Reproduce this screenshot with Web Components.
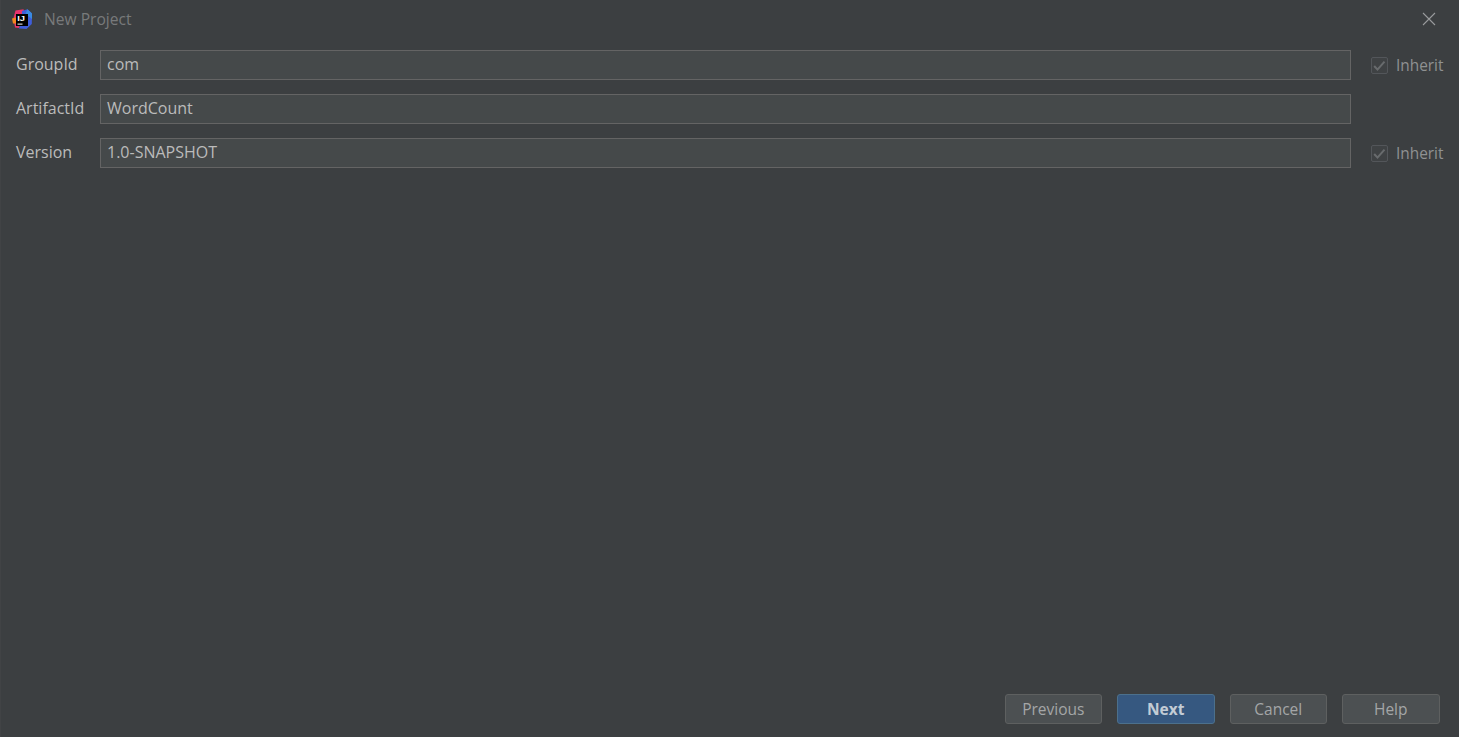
<!DOCTYPE html>
<html><head><meta charset="utf-8"><title>New Project</title>
<style>
html,body{margin:0;height:100%;background:#3c3f41;overflow:hidden}
body{font-family:"Open Sans","Noto Sans",sans-serif}
</style></head><body>
<np-dialog>
  <np-titlebar slot="title">New Project</np-titlebar>
  <np-row label="GroupId" value="com" inherit></np-row>
  <np-row label="ArtifactId" value="WordCount"></np-row>
  <np-row label="Version" value="1.0-SNAPSHOT" inherit></np-row>
  <np-button slot="footer">Previous</np-button>
  <np-button slot="footer" primary>Next</np-button>
  <np-button slot="footer">Cancel</np-button>
  <np-button slot="footer">Help</np-button>
</np-dialog>
<script>
class NpDialog extends HTMLElement{constructor(){super();this.attachShadow({mode:'open'}).innerHTML=`<style>
:host{display:flex;flex-direction:column;height:737px;width:1459px;box-sizing:border-box;background:#3c3f41;border-left:1px solid #414345}
.body{flex:1;display:flex;flex-direction:column;gap:14px;padding:12px 8px 0 15px}
.foot{display:flex;justify-content:flex-end;gap:15px;padding:0 19.5px 13px 0}
</style><slot name="title"></slot><div class="body"><slot></slot></div><div class="foot"><slot name="footer"></slot></div>`}}
class NpTitlebar extends HTMLElement{constructor(){super();this.attachShadow({mode:'open'}).innerHTML=`<style>
:host{display:flex;align-items:center;height:38px;box-sizing:border-box;padding:0 23px 0 11px;font-size:15.6px;color:#787a7b}
.t{flex:1;margin-left:12px}
svg{display:block}
text{font-family:"Liberation Sans",sans-serif;font-weight:700;font-size:8px;fill:#fff}
</style>
<svg width="20" height="20" viewBox="0 0 20 20">
<path d="M1.5 9 L3.5 1.5 L11.5 0.2 L13 6 L7 19 L3 18.5 Z" fill="#e8336b"/>
<path d="M0 9.5 L4 8.5 L4 14.5 L1 14.5 Z" fill="#f2861f"/>
<path d="M10 2 L15.5 0.3 L20 4.5 L19.8 15 L14.5 20 L7 19.5 L10 10 Z" fill="#3f5edb"/>
<path d="M15.5 0.3 L20 4.5 L20 10 L13.5 5 Z" fill="#3a8ae0"/>
<rect x="4" y="5" width="12" height="12" fill="#000"/>
<rect x="5.5" y="14.6" width="5" height="1" fill="#fff"/>
<text x="5.2" y="12.4" textLength="7.8" lengthAdjust="spacingAndGlyphs">IJ</text>
</svg>
<span class="t"><slot></slot></span>
<svg width="14" height="14" viewBox="0 0 14 14"><path d="M1 1L13 13M13 1L1 13" stroke="#9a9c9d" stroke-width="1.1" fill="none"/></svg>`}}
class NpRow extends HTMLElement{connectedCallback(){if(this.shadowRoot)return;const inh=this.hasAttribute('inherit');this.attachShadow({mode:'open'}).innerHTML=`<style>
:host{display:flex;align-items:center;height:30px;font-size:16px;color:#bbbbbb}
.l{width:84px;flex:none;padding-bottom:2px}
.f{width:1251px;height:30px;flex:none;box-sizing:border-box;border:1px solid #646464;background:#45494a;padding:0 6px 2px;display:flex;align-items:center}
.c{margin-left:20px;display:flex;align-items:center;gap:8px;color:#8f9192;font-size:15.4px}
.b{width:17px;height:17px;box-sizing:border-box;border:1px solid #53565a;border-radius:2px;background:#3f4244;display:block}
</style><span class="l">${this.getAttribute('label')}</span><div class="f">${this.getAttribute('value')}</div>${inh?`<div class="c"><svg class="b" viewBox="0 0 15 15"><path d="M2.2 8L5.5 11.6L12.5 3.6" stroke="#686b6d" stroke-width="2" fill="none"/></svg><span>Inherit</span></div>`:''}`}}
class NpButton extends HTMLElement{constructor(){super();this.attachShadow({mode:'open'}).innerHTML=`<style>
:host{display:flex;align-items:center;justify-content:center;width:97.5px;height:30px;box-sizing:border-box;border:1px solid #5e6060;border-radius:3px;background:#4c5052;color:#a4a6a7;font-size:15.5px}
:host([primary]){background:#365880;border-color:#4c708c;color:#c3ccd5;font-weight:700}
</style><slot></slot>`}}
customElements.define('np-dialog',NpDialog);customElements.define('np-titlebar',NpTitlebar);customElements.define('np-row',NpRow);customElements.define('np-button',NpButton);
</script>
</body></html>
